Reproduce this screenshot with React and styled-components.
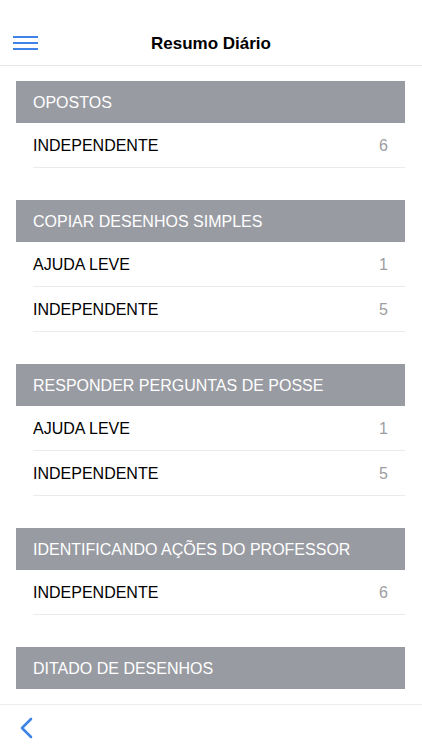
import styled, { createGlobalStyle } from 'styled-components';

const GlobalStyle = createGlobalStyle`
  body {
    margin: 0;
    background: #fff;
    font-family: "Liberation Sans", Arial, sans-serif;
  }
`;

const Screen = styled.div`
  width: 422px;
  height: 750px;
  display: flex;
  flex-direction: column;
  background: #fff;
  overflow: hidden;
`;

const NavBar = styled.div`
  height: 65px;
  flex-shrink: 0;
  display: flex;
  align-items: flex-end;
  justify-content: center;
  position: relative;
  border-bottom: 1px solid #e6e6e8;
  box-sizing: content-box;
`;

const Title = styled.h1`
  margin: 0 0 11px;
  font-size: 17px;
  font-weight: 600;
  color: #000;
`;

const MenuButton = styled.button`
  position: absolute;
  left: 13px;
  bottom: 15px;
  padding: 0;
  border: 0;
  background: none;
  display: flex;
`;

const Content = styled.div`
  flex: 1;
  overflow: hidden;
  padding: 15px 17px 0 16px;
`;

const Section = styled.div`
  margin-bottom: 32px;
`;

const SectionHeader = styled.div`
  height: 42px;
  box-sizing: border-box;
  display: flex;
  align-items: center;
  padding: 2px 0 0 17px;
  background: #999ba2;
  color: #fff;
  font-size: 16px;
`;

const Row = styled.div`
  height: 44px;
  box-sizing: content-box;
  margin-left: 17px;
  display: flex;
  align-items: center;
  justify-content: space-between;
  padding-top: 1px;
  margin-top: -1px;
  border-bottom: 1px solid #ebebed;
  font-size: 16px;
  color: #000;
  & > span:first-child {
    padding-top: 2px;
  }
`;

const Count = styled.span`
  color: #9d9da1;
  padding: 2px 17px 0 0;
`;

const Footer = styled.div`
  height: 45px;
  flex-shrink: 0;
  border-top: 1px solid #ececee;
  display: flex;
  align-items: center;
  padding-left: 19px;
`;

const sections = [
  { title: 'OPOSTOS', rows: [['INDEPENDENTE', 6]] },
  { title: 'COPIAR DESENHOS SIMPLES', rows: [['AJUDA LEVE', 1], ['INDEPENDENTE', 5]] },
  { title: 'RESPONDER PERGUNTAS DE POSSE', rows: [['AJUDA LEVE', 1], ['INDEPENDENTE', 5]] },
  { title: 'IDENTIFICANDO AÇÕES DO PROFESSOR', rows: [['INDEPENDENTE', 6]] },
  { title: 'DITADO DE DESENHOS', rows: [] },
];

const App = () => {
  return (
    <Screen>
      <GlobalStyle />
      <NavBar>
        <MenuButton>
          <svg width="25" height="14" viewBox="0 0 25 14">
            <g stroke="#3f83e8" strokeWidth="2">
              <line x1="0" y1="1" x2="25" y2="1" />
              <line x1="0" y1="7" x2="25" y2="7" />
              <line x1="0" y1="13" x2="25" y2="13" />
            </g>
          </svg>
        </MenuButton>
        <Title>Resumo Diário</Title>
      </NavBar>
      <Content>
        {sections.map(section => (
          <Section key={section.title}>
            <SectionHeader>{section.title}</SectionHeader>
            {section.rows.map(([label, count]) => (
              <Row key={label}>
                <span>{label}</span>
                <Count>{count}</Count>
              </Row>
            ))}
          </Section>
        ))}
      </Content>
      <Footer>
        <svg width="14" height="22" viewBox="0 0 14 22">
          <path d="M12 2 L3 11 L12 20" fill="none" stroke="#3f83e8" strokeWidth="2.6" strokeLinecap="round" strokeLinejoin="round" />
        </svg>
      </Footer>
    </Screen>
  );
};

export default App;
